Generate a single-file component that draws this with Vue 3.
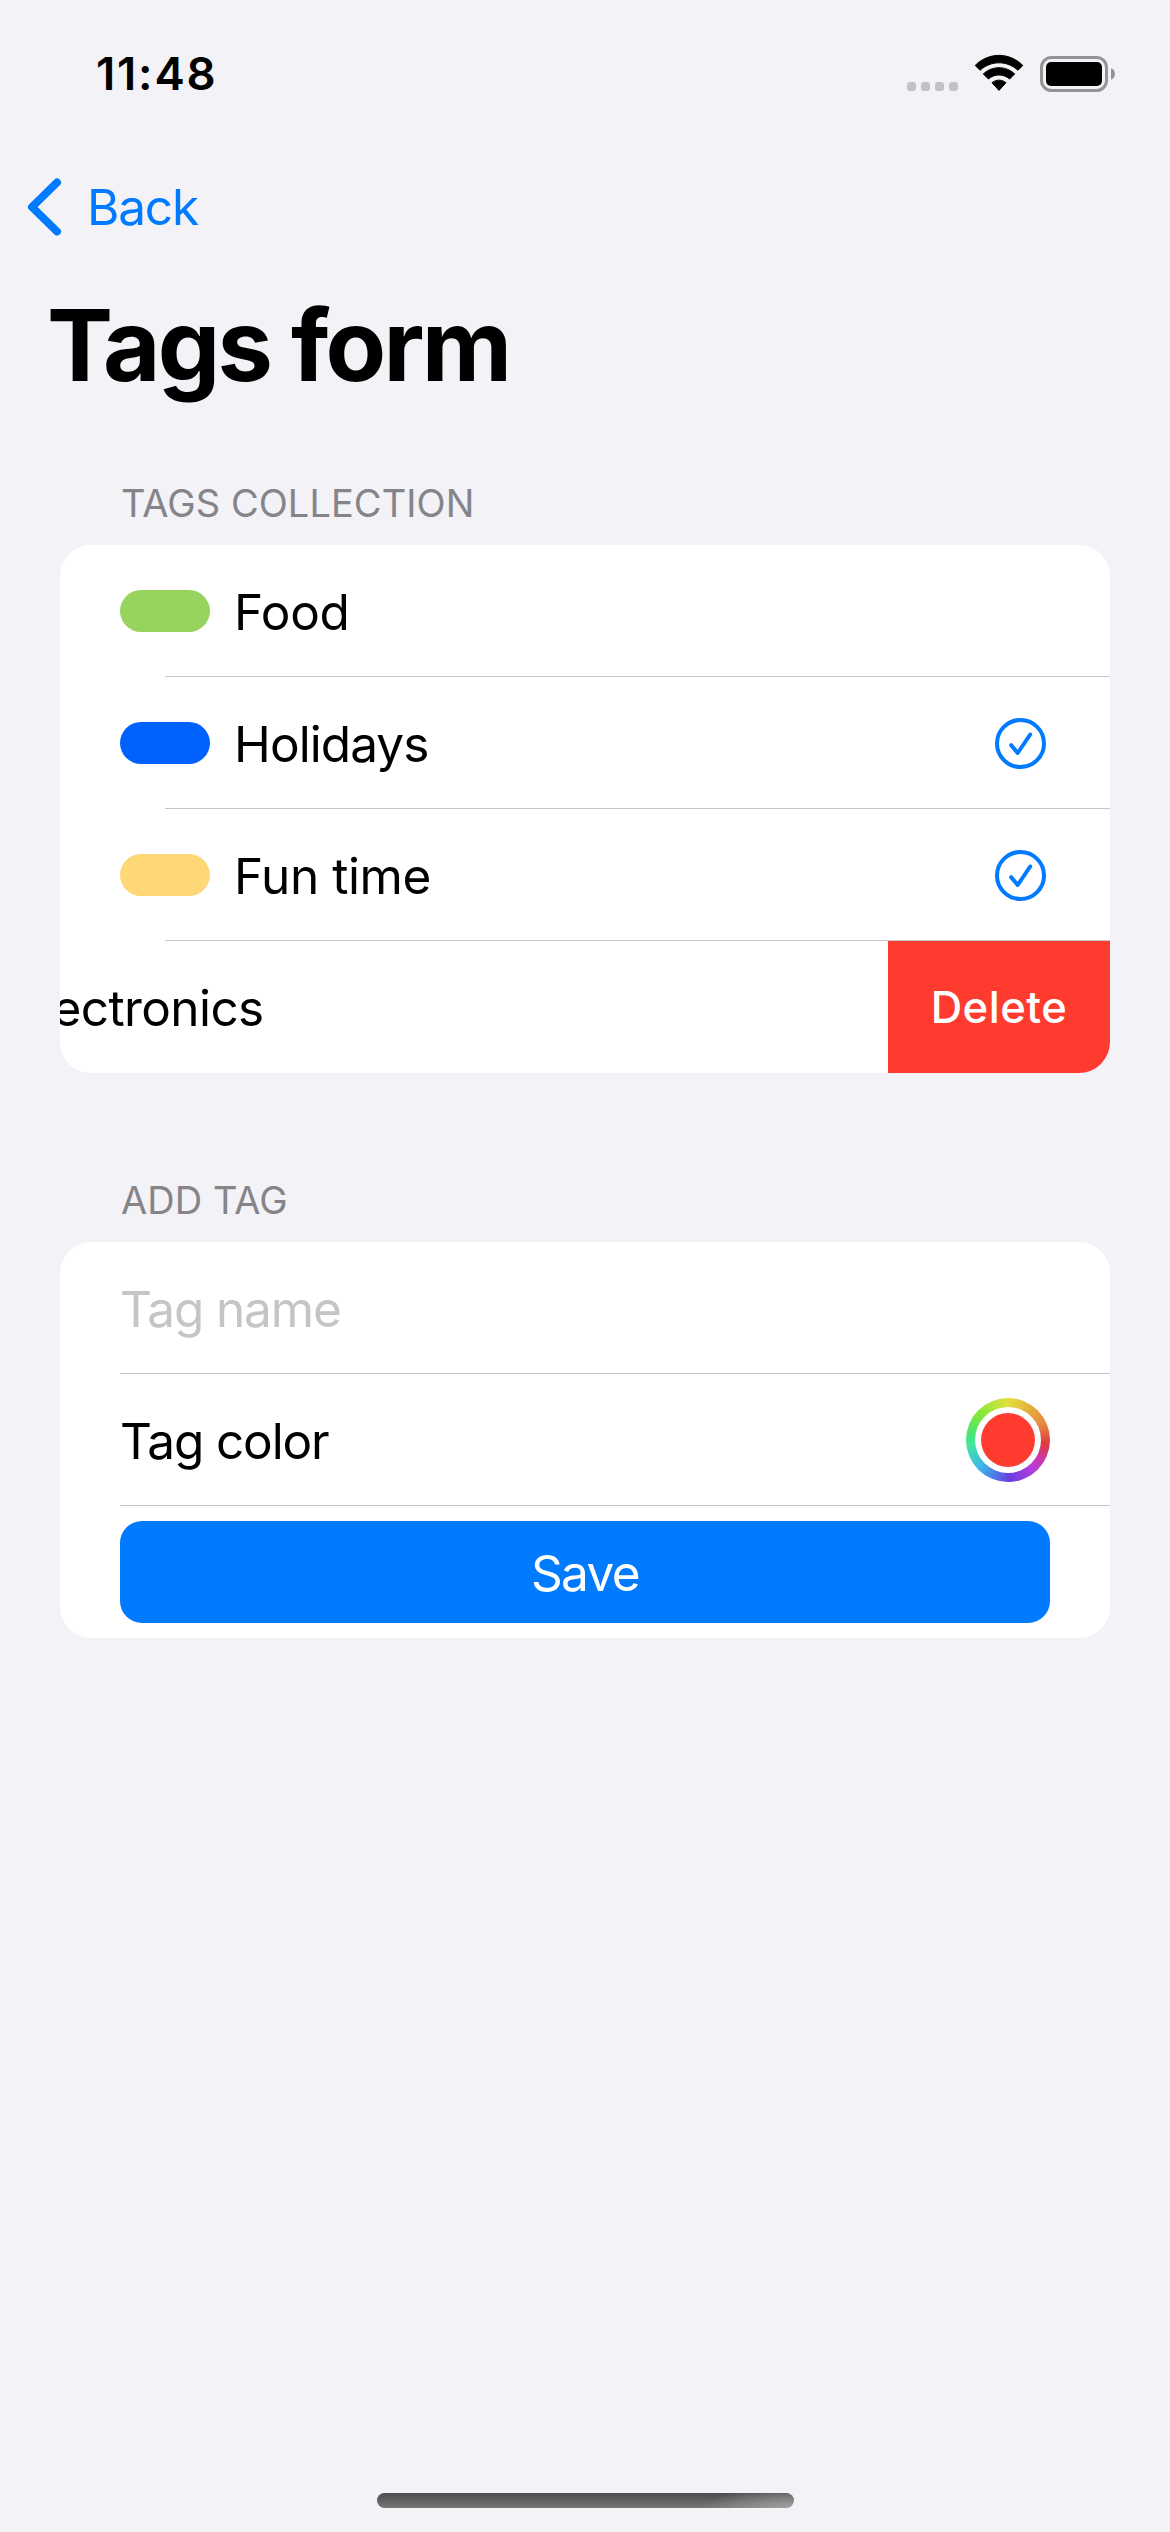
<script setup>
import { ref } from 'vue'

const tags = [
  { name: 'Food', key: 'food', color: '#97d35f', selected: false },
  { name: 'Holidays', key: 'holidays', color: '#0061fd', selected: true },
  { name: 'Fun time', key: 'fun', color: '#fed777', selected: true },
  { name: 'Electronics', key: 'electronics', color: '#ff3b30', selected: false, swiped: true },
]
const tagName = ref('')
</script>

<template>
  <main class="screen">
    <header class="status">
      <span class="time">11:48</span>
      <div class="indicators">
        <div class="dots"><i v-for="n in 4" :key="n"></i></div>
        <svg class="wifi" width="50" height="38" viewBox="0 0 50 38">
          <path d="M1.2 11.4C14.8-2 35.2-2 48.8 11.4L44 16.3C33 6.3 17 6.3 6 16.3ZM9.3 19.9C18.5 11.6 31.5 11.6 40.7 19.9L35.6 25C29.3 19.6 20.7 19.6 14.4 25ZM18 28.7C22.2 25.3 27.8 25.3 32 28.7L25 36.4Z" stroke="#000" stroke-width="1" stroke-linejoin="round" />
        </svg>
        <svg class="battery" width="76" height="36" viewBox="0 0 76 36">
          <rect x="1.5" y="1.5" width="65" height="33" rx="10" fill="none" stroke="#949396" stroke-width="3" />
          <rect x="6" y="6" width="56" height="24" rx="5" />
          <path d="M71 12.3C76.3 14 76.3 22 71 23.7Z" fill="#949396" />
        </svg>
      </div>
    </header>

    <nav class="nav">
      <svg width="36" height="60" viewBox="0 0 36 60">
        <path d="M31 5.5L6 30L31 54.5" fill="none" stroke="#007aff" stroke-width="8" stroke-linecap="round" stroke-linejoin="round" />
      </svg>
      <span class="back">Back</span>
    </nav>

    <h1 class="title">Tags form</h1>

    <section class="group">
      <h2 class="caption">TAGS COLLECTION</h2>
      <ul class="card">
        <li v-for="tag in tags" :key="tag.key" class="row tag" :class="{ swiped: tag.swiped }">
          <div class="cell">
            <span class="swatch" :style="{ background: tag.color }"></span>
            <span class="label" :class="tag.key">{{ tag.name }}</span>
            <svg v-if="tag.selected" class="check" width="52" height="52" viewBox="0 0 52 52">
              <circle cx="25.5" cy="25.5" r="23.5" />
              <path d="M16.2 27.2L22.7 35L35.2 16.5" />
            </svg>
          </div>
          <button v-if="tag.swiped" class="delete">Delete</button>
        </li>
      </ul>
    </section>

    <section class="group second">
      <h2 class="caption add">ADD TAG</h2>
      <div class="card">
        <div class="row field">
          <input v-model="tagName" class="input" placeholder="Tag name" />
        </div>
        <div class="row field">
          <span class="label color">Tag color</span>
          <span class="wheel"><span class="hole"><span class="picked"></span></span></span>
        </div>
        <div class="row field">
          <button class="save">Save</button>
        </div>
      </div>
    </section>

    <footer class="home"><div class="bar"></div></footer>
  </main>
</template>

<style>
body {
  background: #f2f2f7;
}
</style>

<style scoped>
.screen {
  box-sizing: border-box;
  width: 1170px;
  height: 2532px;
  display: flex;
  flex-direction: column;
  background: #f2f2f7;
  color: #000;
  font-family: Inter, sans-serif;
  font-size: 49.5px;
  overflow: hidden;
}

.status {
  display: flex;
  justify-content: space-between;
  align-items: flex-start;
  height: 60px;
  padding: 44px 54px 0 96px;
}
.time {
  font-size: 45.5px;
  font-weight: 600;
  line-height: 60px;
  letter-spacing: 1.8px;
}
.indicators {
  display: flex;
  padding-top: 10px;
}
.dots {
  display: flex;
  gap: 5px;
  padding-top: 28px;
  margin-right: 16px;
}
.dots i {
  width: 9px;
  height: 9px;
  border-radius: 3px;
  background: #c2c1c6;
}
.battery {
  margin: 2px 0 0 16px;
}

.nav {
  display: flex;
  align-items: center;
  height: 60px;
  margin-top: 73px;
  padding-left: 26px;
}
.nav svg {
  margin: -1px 25px 0 0;
}
.back {
  line-height: 60px;
  color: #007aff;
  letter-spacing: -1.17px;
}

.title {
  margin: 48px 0 0;
  padding-left: 47px;
  font-size: 99px;
  font-weight: 700;
  line-height: 120px;
  letter-spacing: -2.76px;
}

.group {
  margin: 73px 60px 0;
}
.second {
  margin-top: 102px;
}
.caption {
  margin: 0 0 17px;
  padding-left: 61px;
  font-size: 38px;
  font-weight: 400;
  line-height: 50px;
  letter-spacing: 0.06px;
  color: #858489;
}
.card {
  margin: 0;
  padding: 0;
  list-style: none;
  background: #fff;
  border-radius: 31px;
  overflow: hidden;
}

.row {
  display: flex;
  height: 132px;
  background: linear-gradient(#c5c5c7, #c5c5c7) no-repeat 60px 131px / 100% 1px;
}
.tag {
  background-position-x: 105px;
}
.row:last-child {
  background: none;
}
.cell {
  flex: none;
  box-sizing: border-box;
  display: flex;
  align-items: center;
  width: 1050px;
  padding: 0 63px 0 60px;
}
.swiped .cell {
  margin-left: -222px;
}
.swatch {
  width: 90px;
  height: 42px;
  margin-right: 24px;
  border-radius: 21px;
}
.label {
  padding-top: 2px;
  line-height: 130px;
}
.food { letter-spacing: -0.4px; }
.holidays { letter-spacing: -0.91px; }
.fun { letter-spacing: -0.43px; }
.electronics { letter-spacing: -0.6px; }
.color { letter-spacing: -1.12px; }

.check {
  margin: 2px 0 0 auto;
  fill: none;
  stroke: #007aff;
  stroke-width: 4;
  stroke-linecap: round;
  stroke-linejoin: round;
}

button {
  margin: 0;
  padding: 0;
  border: 0;
  font: inherit;
  color: #fff;
}
.delete {
  width: 222px;
  height: 132px;
  background: #ff3b30;
  font-size: 43.6px;
  font-weight: 500;
  letter-spacing: 0.5px;
}

.field {
  box-sizing: border-box;
  align-items: center;
  justify-content: space-between;
  padding: 0 60px;
}
.input {
  width: 700px;
  height: 130px;
  margin: 0;
  padding: 2px 0 0;
  border: 0;
  outline: 0;
  background: transparent;
  font: inherit;
  letter-spacing: -1.12px;
}
.input::placeholder {
  color: #c5c5c7;
  opacity: 1;
}
.wheel {
  display: flex;
  width: 84px;
  height: 84px;
  border-radius: 50%;
  background: conic-gradient(#e3e03d, #e6a83f 40deg, #e58a42 65deg, #de3a3c 95deg, #c838b0 122deg, #b13ddb 140deg, #6a3fe3 178deg, #4a86e6 205deg, #3fb9e6 228deg, #43e6a0 262deg, #45e67c 275deg, #7fe83c 310deg, #e3e03d);
}
.hole {
  display: flex;
  width: 66px;
  height: 66px;
  margin: auto;
  border-radius: 50%;
  background: #fff;
}
.picked {
  width: 54px;
  height: 54px;
  margin: auto;
  border-radius: 50%;
  background: #ff3b30;
}
.save {
  width: 930px;
  height: 102px;
  padding-top: 2px;
  border-radius: 22px;
  background: #007aff;
  letter-spacing: -1.63px;
}

.home {
  display: flex;
  justify-content: center;
  margin-top: auto;
  padding-bottom: 24px;
}
.bar {
  width: 417px;
  height: 15px;
  border-radius: 8px;
  background:
    radial-gradient(ellipse 90px 22px at 100% 100%, rgba(165, 165, 165, 0.9), rgba(165, 165, 165, 0)),
    linear-gradient(#4b4b4b, #777);
}
</style>
